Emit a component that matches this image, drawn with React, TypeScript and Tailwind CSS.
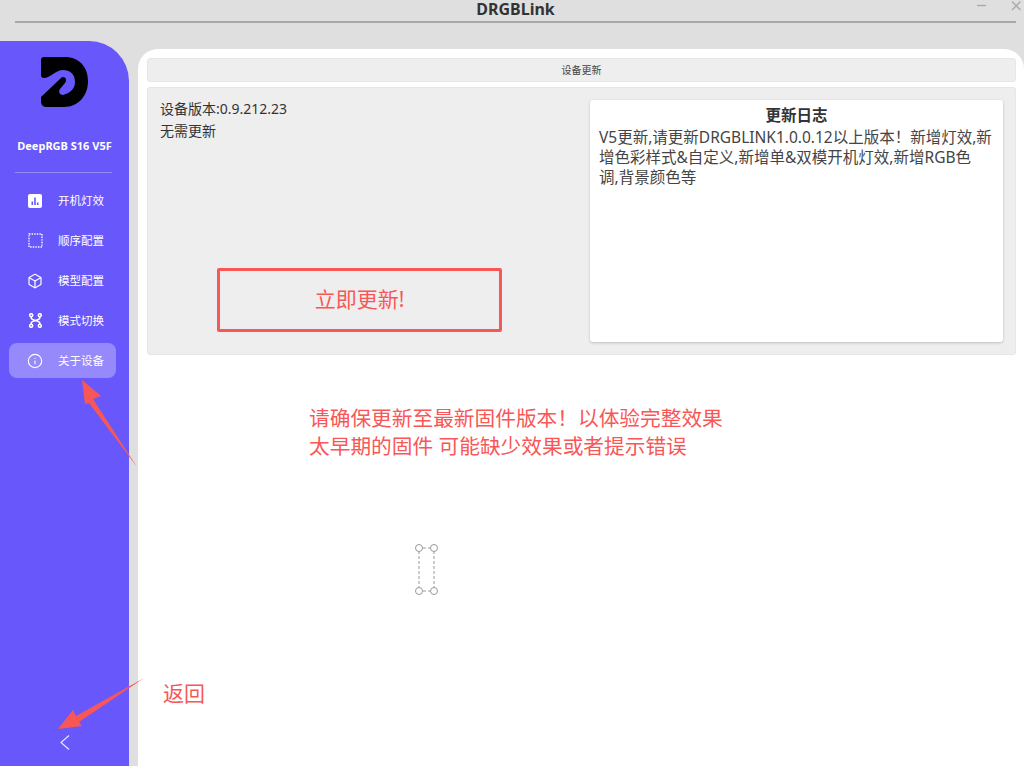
import { Box, Info } from 'lucide-react';

const FONT = "font-['Noto_Sans','Noto_Sans_CJK_SC',sans-serif]";

function Logo() {
  return (
    <svg width="48" height="52" viewBox="0 0 48 52" className="block">
      <path d="M3 1 H24 C38 1 47 11 47 25 C47 40 37 51 23 51 H6 C2 51 0 49 0 45 V41 L20 22 C23 19 27 23 24 27 L19 33 C17 36 19 39 22 39 C30 37 34 32 34 26 C34 18 29 14 22 14 C15 14 9 22 3 22 C1 22 0 21 0 19 V4 C0 2 1 1 3 1 Z" fill="#000" />
    </svg>
  );
}

function ChartIcon() {
  return (
    <svg width="14" height="14" viewBox="0 0 14 14">
      <rect width="14" height="14" rx="2" fill="#fff" />
      <path d="M3.5 7.5 h1.6 v3.5 h-1.6z M6.2 3.5 h1.6 v7.5 h-1.6z M8.9 8.5 h1.6 v2.5 h-1.6z" fill="#6857fa" />
    </svg>
  );
}

function DottedIcon() {
  return (
    <svg width="15" height="15" viewBox="0 0 15 15">
      <rect x="1" y="1" width="13" height="13" fill="none" stroke="#fff" strokeWidth="1.4" strokeDasharray="1.4 1.2" />
    </svg>
  );
}

function SwitchIcon() {
  return (
    <svg width="13" height="15" viewBox="0 0 13 15" fill="none" stroke="#fff" strokeWidth="1.5">
      <circle cx="2.2" cy="2.2" r="1.5" />
      <circle cx="10.8" cy="2.2" r="1.5" />
      <circle cx="2.2" cy="12.8" r="1.5" />
      <circle cx="10.8" cy="12.8" r="1.5" />
      <path d="M2.2 3.7 V5 C2.2 7.5 10.8 7.5 10.8 10 V11.3 M10.8 3.7 V5 C10.8 7.5 2.2 7.5 2.2 10 V11.3" />
    </svg>
  );
}

const MENU = [
  { label: '开机灯效', icon: <ChartIcon /> },
  { label: '顺序配置', icon: <DottedIcon /> },
  { label: '模型配置', icon: <Box size={16} color="#fff" strokeWidth={1.8} /> },
  { label: '模式切换', icon: <SwitchIcon /> },
  { label: '关于设备', icon: <Info size={16} color="#fff" strokeWidth={1.7} />, active: true },
];

export default function App() {
  return (
    <div className={`relative w-[1024px] h-[766px] overflow-hidden bg-[#dfdfdf] flex flex-col ${FONT}`}>
      <header className="h-[41px] shrink-0 relative">
        <div className="h-[23px] ml-[15px] mr-[8px] border-b-2 border-[#a9a9a9] flex justify-center">
          <span className="text-[16px] leading-[18px] font-bold text-[#333]">DRGBLink</span>
        </div>
        <svg width="46" height="12" viewBox="0 0 46 12" className="absolute right-[2px] top-0" fill="none" stroke="#a8a8a8" strokeWidth="1.3">
          <path d="M1 5.5 H10" />
          <path d="M36 1.5 L44.5 10 M44.5 1.5 L36 10" />
        </svg>
      </header>
      <div className="flex-1 flex min-h-0">
        <aside className="w-[129px] shrink-0 bg-[#6857fa] rounded-tr-[40px] flex flex-col items-center">
          <div className="mt-[15px]">
            <Logo />
          </div>
          <div className="mt-[30px] text-[11px] leading-[16px] font-bold text-white">DeepRGB S16 V5F</div>
          <div className="mt-[18px] self-start ml-[15px] w-[97px] h-px bg-white/30" />
          <nav className="mt-[10px] self-start ml-[9px] w-[107px] flex flex-col">
            {MENU.map(i => (
              <div key={i.label} className={`h-[35px] mb-[5px] flex items-center rounded-[8px] ${i.active ? 'bg-white/30' : ''}`}>
                <span className="w-[49px] flex justify-center pl-[3px]">{i.icon}</span>
                <span className="text-[11.5px] text-white">{i.label}</span>
              </div>
            ))}
          </nav>
          <svg width="10" height="15" viewBox="0 0 10 15" fill="none" stroke="#e8e6ff" strokeWidth="1.2" className="mt-auto mb-[16px]">
            <path d="M9 0.5 L1 7.5 L9 14.5" />
          </svg>
        </aside>
        <main className="flex-1 ml-[9px] mt-[8px] bg-white rounded-t-[20px] px-[9px] pt-[9px] min-w-0">
          <div className="h-[24px] mr-[-1px] bg-[#eeeeee] border border-[#e6e6e6] rounded-[3px] flex items-center justify-center text-[10px] text-[#444]">设备更新</div>
          <section className="mt-[5px] h-[268px] mr-[-1px] bg-[#eeeeee] border border-[#e6e6e6] rounded-[3px] flex px-[12px] py-[12px]">
            <div className="w-[430px] shrink-0 flex flex-col text-[14px] text-[#333]">
              <div className="leading-[18px]">设备版本:0.9.212.23</div>
              <div className="leading-[18px] mt-[4px]">无需更新</div>
              <div className="mt-[128px] ml-[57px] w-[285px] h-[64px] border-[3px] border-[#f95757] rounded-[2px] flex items-center justify-center text-[21px] text-[#f95757]">立即更新!</div>
            </div>
            <div className="flex-1 bg-white rounded-[3px] shadow-[0_1px_3px_rgba(0,0,0,0.2)] px-[9px] py-[4px] text-[#333]">
              <div className="text-[15.5px] leading-[22px] font-bold text-center">更新日志</div>
              <p className="mt-[1px] text-[15.5px] leading-[20px] text-[#444] whitespace-nowrap">
                V5更新,请更新DRGBLINK1.0.0.12以上版本！新增灯效,新<br />
                增色彩样式&amp;自定义,新增单&amp;双模开机灯效,新增RGB色<br />
                调,背景颜色等
              </p>
            </div>
          </section>
        </main>
      </div>

      {/* annotations drawn over the screenshot */}
      <div className="absolute left-[309px] top-[404px] text-[20.7px] leading-[28px] text-[#f95757]">
        <div>请确保更新至最新固件版本！以体验完整效果</div>
        <div>太早期的固件 可能缺少效果或者提示错误</div>
      </div>
      <div className="absolute left-[163px] top-[679px] text-[21px] leading-[28px] text-[#f95757]">返回</div>
      <svg width="1024" height="766" viewBox="0 0 1024 766" className="absolute left-0 top-0 pointer-events-none">
        <path d="M82 380 L101 396 L93 399 L137 467 L89 403 L85 404 Z" fill="#f95757" />
        <path d="M58 729 L73 710 L76 716 L144 678 L79 722 L82 726 Z" fill="#f95757" />
        <g fill="none" stroke="#9a9a9a" strokeWidth="1">
          <path d="M419 551 V588 M434 551 V588 M423 548 H430 M423 591 H430" strokeDasharray="3 2" />
          <circle cx="419" cy="548" r="3.5" fill="#fff" />
          <circle cx="434" cy="548" r="3.5" fill="#fff" />
          <circle cx="419" cy="591" r="3.5" fill="#fff" />
          <circle cx="434" cy="591" r="3.5" fill="#fff" />
        </g>
      </svg>
    </div>
  );
}
